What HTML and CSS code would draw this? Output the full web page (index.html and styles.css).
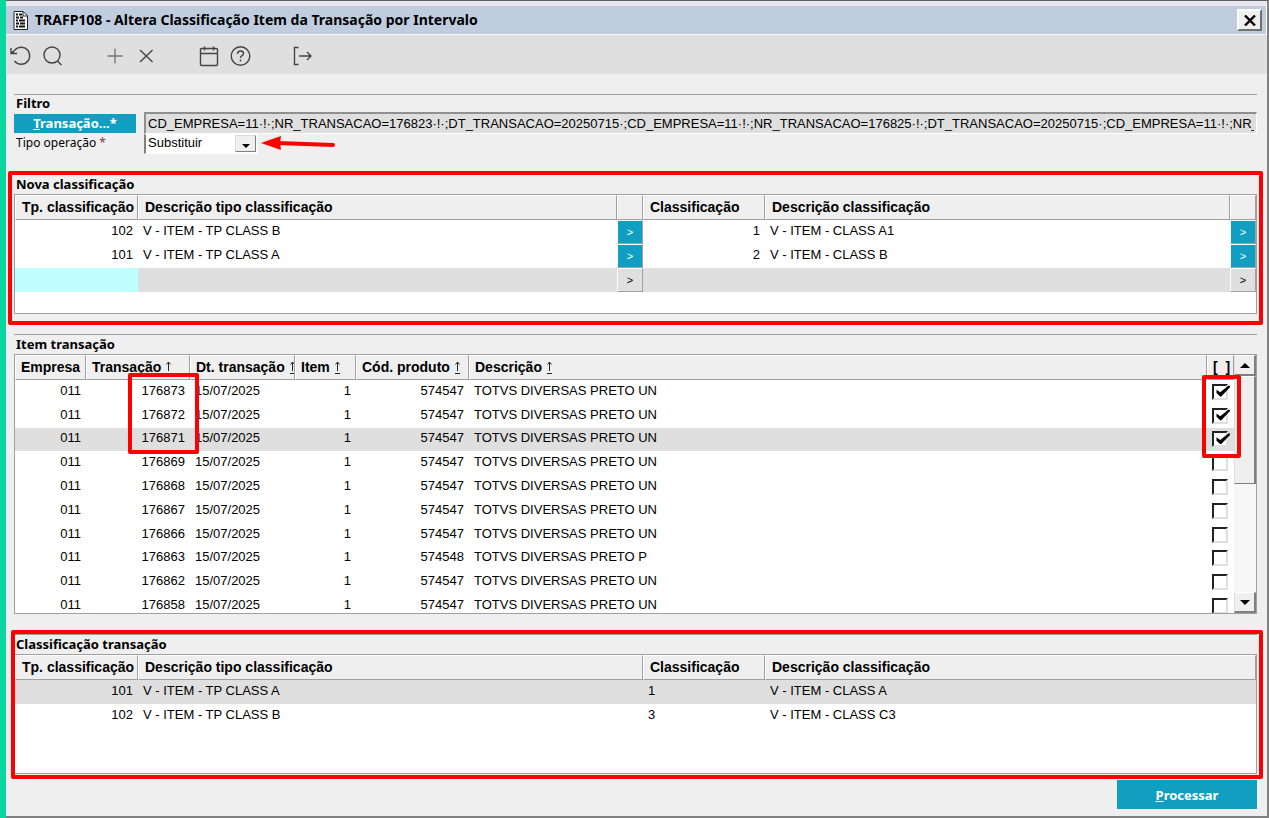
FILE: index.html
```html
<!DOCTYPE html>
<html lang="pt-BR">
<head>
  <meta charset="UTF-8">
  <title>TRAFP108 - Altera Classificação Item da Transação por Intervalo</title>
  <link rel="stylesheet" href="styles.css">
</head>
<body>
  <svg class="defs" width="0" height="0">
    <symbol id="sort" viewBox="0 0 7 15">
      <path d="M3.5 2v9M1.5 4.5l2-2.5 2 2.5M1 13.5h5" fill="none" stroke="#222" stroke-width="1"/>
    </symbol>
  </svg>

  <div class="window">
    <header class="titlebar">
      <svg class="app-icon" width="15" height="19" viewBox="0 0 15 19">
        <path d="M1 .5h9l4.500 4v14H1z" fill="#fff" stroke="#222"/>
        <path d="M10 1v4h4" fill="none" stroke="#222"/>
        <path d="M3 3.500h2M6 3.500h3M3 6.500h3M7 6.500h3M3 9.500h2M6 9.500h6M3 12.500h3M7 12.500h5M3 15.500h2M6 15.500h6" stroke="#111" stroke-width="2"/>
      </svg>
      <h1>TRAFP108 - Altera Classificação Item da Transação por Intervalo</h1>
      <button class="close" aria-label="Fechar">
        <svg width="12" height="11" viewBox="0 0 12 11"><path d="M1 0.500l10 10M11 .5l-10 10" stroke="#000" stroke-width="2.400"/></svg>
      </button>
    </header>

    <nav class="toolbar">
      <button aria-label="Desfazer"><svg width="22" height="22" viewBox="0 0 22 22"><path d="M3 8.500A8.500 8.500 0 1 1 4.500 16M1 3v5.500h6M1.500 8l4-3.500"/></svg></button>
      <button aria-label="Pesquisar"><svg width="22" height="22" viewBox="0 0 22 22"><circle cx="10" cy="10" r="8"/><path d="M15.500 16l4 4"/></svg></button>
      <button class="gap" aria-label="Incluir"><svg width="22" height="22" viewBox="0 0 22 22"><path class="light" d="M11 3.500v15M3.500 11h15"/></svg></button>
      <button aria-label="Excluir"><svg width="22" height="22" viewBox="0 0 22 22"><path d="M4 5l12.500 12M16.500 5L4 17"/></svg></button>
      <button class="gap" aria-label="Agenda"><svg width="22" height="22" viewBox="0 0 22 22"><path d="M2.500 4.500q0-1 1-1h15q1 0 1 1v15q0 1-1 1h-15q-1 0-1-1zM2.500 8.500h17M6.500 1.500v4M15.500 1.500v4"/></svg></button>
      <button aria-label="Ajuda"><svg width="22" height="22" viewBox="0 0 22 22"><circle cx="10.500" cy="11" r="9.300"/><path d="M7.500 9q0-3 3-3t3 2.500q0 1.500-1.500 2.200T10.500 13M10.500 14.500v2"/></svg></button>
      <button class="gap" aria-label="Sair"><svg width="22" height="22" viewBox="0 0 22 22"><path d="M6.500 2.500h-4v17h4M7 11h12M15 7l4 4-4 4"/></svg></button>
    </nav>

    <main>
      <section class="filter">
        <h2>Filtro</h2>
        <div class="filter-row">
          <button class="btn" id="transacaoBtn"><u>T</u>ransação...*</button>
          <input class="field" type="text" readonly aria-labelledby="transacaoBtn" value="CD_EMPRESA=11·!·;NR_TRANSACAO=176823·!·;DT_TRANSACAO=20250715·;CD_EMPRESA=11·!·;NR_TRANSACAO=176825·!·;DT_TRANSACAO=20250715·;CD_EMPRESA=11·!·;NR_">
        </div>
        <div class="filter-row">
          <label for="tipo">Tipo operação <span class="req">*</span></label>
          <div class="combo">
            <select id="tipo">
              <option>Substituir</option>
            </select>
            <span class="combo-btn"></span>
          </div>
          <svg class="arrow" width="76" height="16" viewBox="0 0 76 16">
            <path d="M16 8l56 2" stroke="#f00" stroke-width="4" stroke-linecap="round"/>
            <path d="M0 8L20 1l-1 7 1 7z" fill="#f00"/>
          </svg>
        </div>
      </section>

      <section class="new-class">
        <h2>Nova classificação</h2>
        <div class="grid">
          <table>
            <colgroup><col class="w-type"><col class="w-desc"><col class="w-btn"><col class="w-class"><col><col class="w-btn"></colgroup>
            <thead>
              <tr><th>Tp. classificação</th><th>Descrição tipo classificação</th><th></th><th>Classificação</th><th>Descrição classificação</th><th></th></tr>
            </thead>
            <tbody>
              <tr><td class="num">102</td><td>V - ITEM - TP CLASS B</td><td class="cell-btn"><button>&gt;</button></td><td class="num">1</td><td>V - ITEM - CLASS A1</td><td class="cell-btn"><button>&gt;</button></td></tr>
              <tr><td class="num">101</td><td>V - ITEM - TP CLASS A</td><td class="cell-btn"><button>&gt;</button></td><td class="num">2</td><td>V - ITEM - CLASS B</td><td class="cell-btn"><button>&gt;</button></td></tr>
              <tr class="current"><td class="editing"></td><td></td><td class="cell-btn"><button class="off">&gt;</button></td><td></td><td></td><td class="cell-btn"><button class="off">&gt;</button></td></tr>
            </tbody>
          </table>
        </div>
        <div class="mark"></div>
      </section>

      <section class="items">
        <h2>Item transação</h2>
        <div class="grid with-scroll">
          <table>
            <colgroup><col class="w-emp"><col class="w-trans"><col class="w-trans"><col class="w-item"><col class="w-prod"><col><col class="w-check"></colgroup>
            <thead>
              <tr>
                <th>Empresa</th>
                <th>Transação <svg class="sort"><use href="#sort"/></svg></th>
                <th>Dt. transação <svg class="sort"><use href="#sort"/></svg></th>
                <th>Item <svg class="sort"><use href="#sort"/></svg></th>
                <th>Cód. produto <svg class="sort"><use href="#sort"/></svg></th>
                <th>Descrição <svg class="sort"><use href="#sort"/></svg></th>
                <th>[ &nbsp;]</th>
              </tr>
            </thead>
            <tbody>
              <tr><td class="num">011</td><td class="num">176873</td><td>15/07/2025</td><td class="num">1</td><td class="num">574547</td><td>TOTVS DIVERSAS PRETO UN</td><td><input type="checkbox" aria-label="176873" checked></td></tr>
              <tr><td class="num">011</td><td class="num">176872</td><td>15/07/2025</td><td class="num">1</td><td class="num">574547</td><td>TOTVS DIVERSAS PRETO UN</td><td><input type="checkbox" aria-label="176872" checked></td></tr>
              <tr class="current"><td class="num">011</td><td class="num">176871</td><td>15/07/2025</td><td class="num">1</td><td class="num">574547</td><td>TOTVS DIVERSAS PRETO UN</td><td><input type="checkbox" aria-label="176871" checked></td></tr>
              <tr><td class="num">011</td><td class="num">176869</td><td>15/07/2025</td><td class="num">1</td><td class="num">574547</td><td>TOTVS DIVERSAS PRETO UN</td><td><input type="checkbox" aria-label="176869"></td></tr>
              <tr><td class="num">011</td><td class="num">176868</td><td>15/07/2025</td><td class="num">1</td><td class="num">574547</td><td>TOTVS DIVERSAS PRETO UN</td><td><input type="checkbox" aria-label="176868"></td></tr>
              <tr><td class="num">011</td><td class="num">176867</td><td>15/07/2025</td><td class="num">1</td><td class="num">574547</td><td>TOTVS DIVERSAS PRETO UN</td><td><input type="checkbox" aria-label="176867"></td></tr>
              <tr><td class="num">011</td><td class="num">176866</td><td>15/07/2025</td><td class="num">1</td><td class="num">574547</td><td>TOTVS DIVERSAS PRETO UN</td><td><input type="checkbox" aria-label="176866"></td></tr>
              <tr><td class="num">011</td><td class="num">176863</td><td>15/07/2025</td><td class="num">1</td><td class="num">574548</td><td>TOTVS DIVERSAS PRETO P</td><td><input type="checkbox" aria-label="176863"></td></tr>
              <tr><td class="num">011</td><td class="num">176862</td><td>15/07/2025</td><td class="num">1</td><td class="num">574547</td><td>TOTVS DIVERSAS PRETO UN</td><td><input type="checkbox" aria-label="176862"></td></tr>
              <tr><td class="num">011</td><td class="num">176858</td><td>15/07/2025</td><td class="num">1</td><td class="num">574547</td><td>TOTVS DIVERSAS PRETO UN</td><td><input type="checkbox" aria-label="176858"></td></tr>
            </tbody>
          </table>
          <div class="scrollbar">
            <button class="up" aria-label="Subir"></button>
            <div class="thumb"></div>
            <button class="down" aria-label="Descer"></button>
          </div>
        </div>
        <div class="mark mark-trans"></div>
        <div class="mark mark-check"></div>
      </section>

      <section class="trans-class">
        <h2>Classificação transação</h2>
        <div class="grid">
          <table>
            <colgroup><col class="w-type"><col class="w-desc-wide"><col class="w-class"><col></colgroup>
            <thead>
              <tr><th>Tp. classificação</th><th>Descrição tipo classificação</th><th>Classificação</th><th>Descrição classificação</th></tr>
            </thead>
            <tbody>
              <tr class="current"><td class="num">101</td><td>V - ITEM - TP CLASS A</td><td>1</td><td>V - ITEM - CLASS A</td></tr>
              <tr><td class="num">102</td><td>V - ITEM - TP CLASS B</td><td>3</td><td>V - ITEM - CLASS C3</td></tr>
            </tbody>
          </table>
        </div>
        <div class="mark"></div>
      </section>

      <footer>
        <button class="btn process"><u>P</u>rocessar</button>
      </footer>
    </main>
  </div>
</body>
</html>
```
FILE: styles.css
```css
* {
  box-sizing: border-box;
}

body {
  margin: 0;
  min-height: 100vh;
  display: flex;
  background-color: #0ad6a0;
  color: #000;
  font-family: "Liberation Sans", Arial, sans-serif;
  font-size: 13px;
}

button, input, select {
  font: inherit;
  margin: 0;
  border-radius: 0;
}

.defs {
  position: absolute;
}

.window {
  flex: 1;
  min-width: 0;
  margin-left: 6px;
  background-color: #efefef;
  border-top: 1px solid #606068;
  border-right: 2px solid #808080;
  border-bottom: 2px solid #808080;
}

/* title bar */
.titlebar {
  display: flex;
  align-items: center;
  height: 34px;
  padding: 0 4px 0 7px;
  border-top: 5px solid #e8e6ee;
  border-right: 1px solid #fff;
  border-bottom: 1px solid #f6f6f6;
  background-color: #bfcddf;
}

.titlebar h1 {
  flex: 1;
  margin: 0 0 0 7px;
  font-family: "Noto Sans", Tahoma, sans-serif;
  font-size: 14px;
  line-height: 18px;
}

.close {
  display: flex;
  align-items: center;
  justify-content: center;
  width: 25px;
  height: 22px;
  padding: 0;
  background-color: #efefef;
  border: 2px solid;
  border-color: #fff #707070 #707070 #fff;
}

/* toolbar */
.toolbar {
  display: flex;
  align-items: center;
  gap: 10px;
  height: 39px;
  padding: 2px 0 0 4px;
  background-color: #dfdfdf;
}

.toolbar button {
  display: flex;
  padding: 0;
  border: none;
  background: none;
}

.toolbar .gap {
  margin-left: 30px;
}

.toolbar svg {
  fill: none;
  stroke: #444;
  stroke-width: 1.4;
}

.toolbar .light {
  stroke: #777;
}

main {
  padding: 20px 10px 7px 8px;
}

section {
  position: relative;
  border-top: 1px solid #a0a0a0;
}

h2 {
  margin: 0;
  padding-left: 2px;
  font-family: "Noto Sans", Tahoma, sans-serif;
  font-size: 13px;
  line-height: 19px;
}

.btn {
  padding: 0;
  border: none;
  background-color: #109fc0;
  color: #fff;
  font-family: "Noto Sans", Tahoma, sans-serif;
  font-size: 13px;
  font-weight: bold;
}

/* filter */
.filter {
  margin-bottom: 20px;
}

.filter h2 {
  line-height: 17px;
}

.filter-row {
  display: flex;
  align-items: center;
}

.filter-row .btn {
  width: 122px;
  height: 19px;
  margin-right: 8px;
  line-height: 19px;
}

.filter-row label {
  width: 130px;
  padding: 0 0 3px 2px;
  font-family: "Noto Sans", Tahoma, sans-serif;
  font-size: 12px;
  line-height: 16px;
}

.req {
  color: #804040;
}

.field {
  flex: 1;
  min-width: 0;
  height: 22px;
  padding: 0 2px;
  background-color: #dfdfdf;
  border: 1px solid #fff;
  border-top: 2px solid #909090;
  border-left: 2px solid #909090;
}

.combo {
  position: relative;
  width: 114px;
  height: 20px;
}

.combo select {
  appearance: none;
  width: 100%;
  height: 100%;
  padding: 0 2px 4px;
  background-color: #fff;
  color: #000;
  border: 1px solid #fff;
  border-left: 2px solid #808080;
}

.combo-btn {
  position: absolute;
  top: 1px;
  right: 2px;
  width: 21px;
  height: 17px;
  pointer-events: none;
  background-color: #efefef;
  border: 1px solid;
  border-color: #ddd #808080 #808080 #ddd;
}

.combo-btn::after {
  content: "";
  position: absolute;
  top: 8px;
  left: 6px;
  border: 4px solid transparent;
  border-top-color: #000;
  border-bottom: none;
}

.arrow {
  margin: 0 0 2px 3px;
}

/* grids */
.grid {
  min-height: 120px;
  background-color: #fff;
  border: 1px solid #a0a0a0;
}

table {
  width: 100%;
  table-layout: fixed;
  border-collapse: separate;
  border-spacing: 0;
}

th {
  height: 25px;
  padding: 0 0 2px 6px;
  overflow: hidden;
  font-size: 14px;
  line-height: 16px;
  text-align: left;
  white-space: nowrap;
  background-color: #efefef;
  border: 1px solid;
  border-color: #fff #a0a0a0 #a0a0a0 #fff;
}

td {
  height: 24px;
  padding: 0 5px 4px;
  white-space: nowrap;
}

.num {
  text-align: right;
}

.current td {
  background-color: #dfdfdf;
}

.current .editing {
  background-color: #c0ffff;
}

.w-type { width: 123px; }
.w-desc { width: 479px; }
.w-desc-wide { width: 505px; }
.w-btn { width: 26px; }
.w-class { width: 122px; }
.w-emp { width: 71px; }
.w-trans { width: 105px; }
.w-item { width: 61px; }
.w-prod { width: 113px; }
.w-check { width: 27px; }

.cell-btn {
  padding: 0;
}

.cell-btn button {
  display: block;
  width: 100%;
  height: 24px;
  padding: 0;
  background-color: #109fc0;
  color: #fff;
  border: 1px solid;
  border-color: #fff #a0a0a0 #a0a0a0 #fff;
  font-size: 11px;
}

.cell-btn .off {
  background-color: #dfdfdf;
  color: #000;
}

.new-class {
  margin-bottom: 20px;
}

/* transaction items */
.items {
  margin-bottom: 20px;
}

.items th {
  padding-left: 5px;
}

.sort {
  width: 7px;
  height: 15px;
  vertical-align: -3px;
}

.with-scroll {
  display: flex;
  height: 260px;
  overflow: hidden;
}

.with-scroll table {
  flex: 1;
  height: 263px;
}

.with-scroll td {
  height: 23px;
  padding-bottom: 3px;
}

.items .w-emp + .w-trans {
  width: 104px;
}

.items td:last-child {
  padding: 0 0 0 5px;
}

input[type="checkbox"] {
  appearance: none;
  display: block;
  position: relative;
  width: 16px;
  height: 16px;
  background-color: #fff;
  border: 2px solid;
  border-color: #222 #dfdfdf #dfdfdf #222;
}

input[type="checkbox"]:checked::before {
  content: "";
  position: absolute;
  top: -1px;
  left: 1px;
  width: 15px;
  height: 12px;
  background-color: #000;
  clip-path: polygon(10% 40%, 35% 62%, 88% 8%, 100% 8%, 100% 20%, 42% 96%, 34% 96%, 10% 68%);
}

.scrollbar {
  display: flex;
  flex-direction: column;
  width: 22px;
  background-color: #f6f6f6;
}

.scrollbar button, .thumb {
  padding: 0;
  background-color: #efefef;
  border: 1px solid;
  border-color: #fff #808080 #808080 #dfdfdf;
  border-right-width: 2px;
}

.scrollbar button {
  display: flex;
  align-items: center;
  justify-content: center;
  height: 21px;
  border-bottom-width: 2px;
}

.thumb {
  height: 108px;
}

.scrollbar .down {
  margin-top: auto;
}

.up::before, .down::before {
  content: "";
  border: 5px solid transparent;
}

.up::before {
  border-top: none;
  border-bottom-color: #000;
}

.down::before {
  border-bottom: none;
  border-top-color: #000;
}

/* red highlights */
.mark {
  position: absolute;
  inset: -4px -6px -11px -6px;
  border: 4px solid #f00;
  border-radius: 2px;
  pointer-events: none;
}

.trans-class .mark {
  inset: -5px -6px -5px -3px;
}

.mark-trans {
  inset: 38px auto auto 114px;
  width: 71px;
  height: 81px;
}

.mark-check {
  inset: 40px 16px auto auto;
  width: 39px;
  height: 83px;
}

footer {
  display: flex;
  justify-content: flex-end;
  margin-top: 6px;
}

.process {
  width: 140px;
  height: 29px;
}
```
